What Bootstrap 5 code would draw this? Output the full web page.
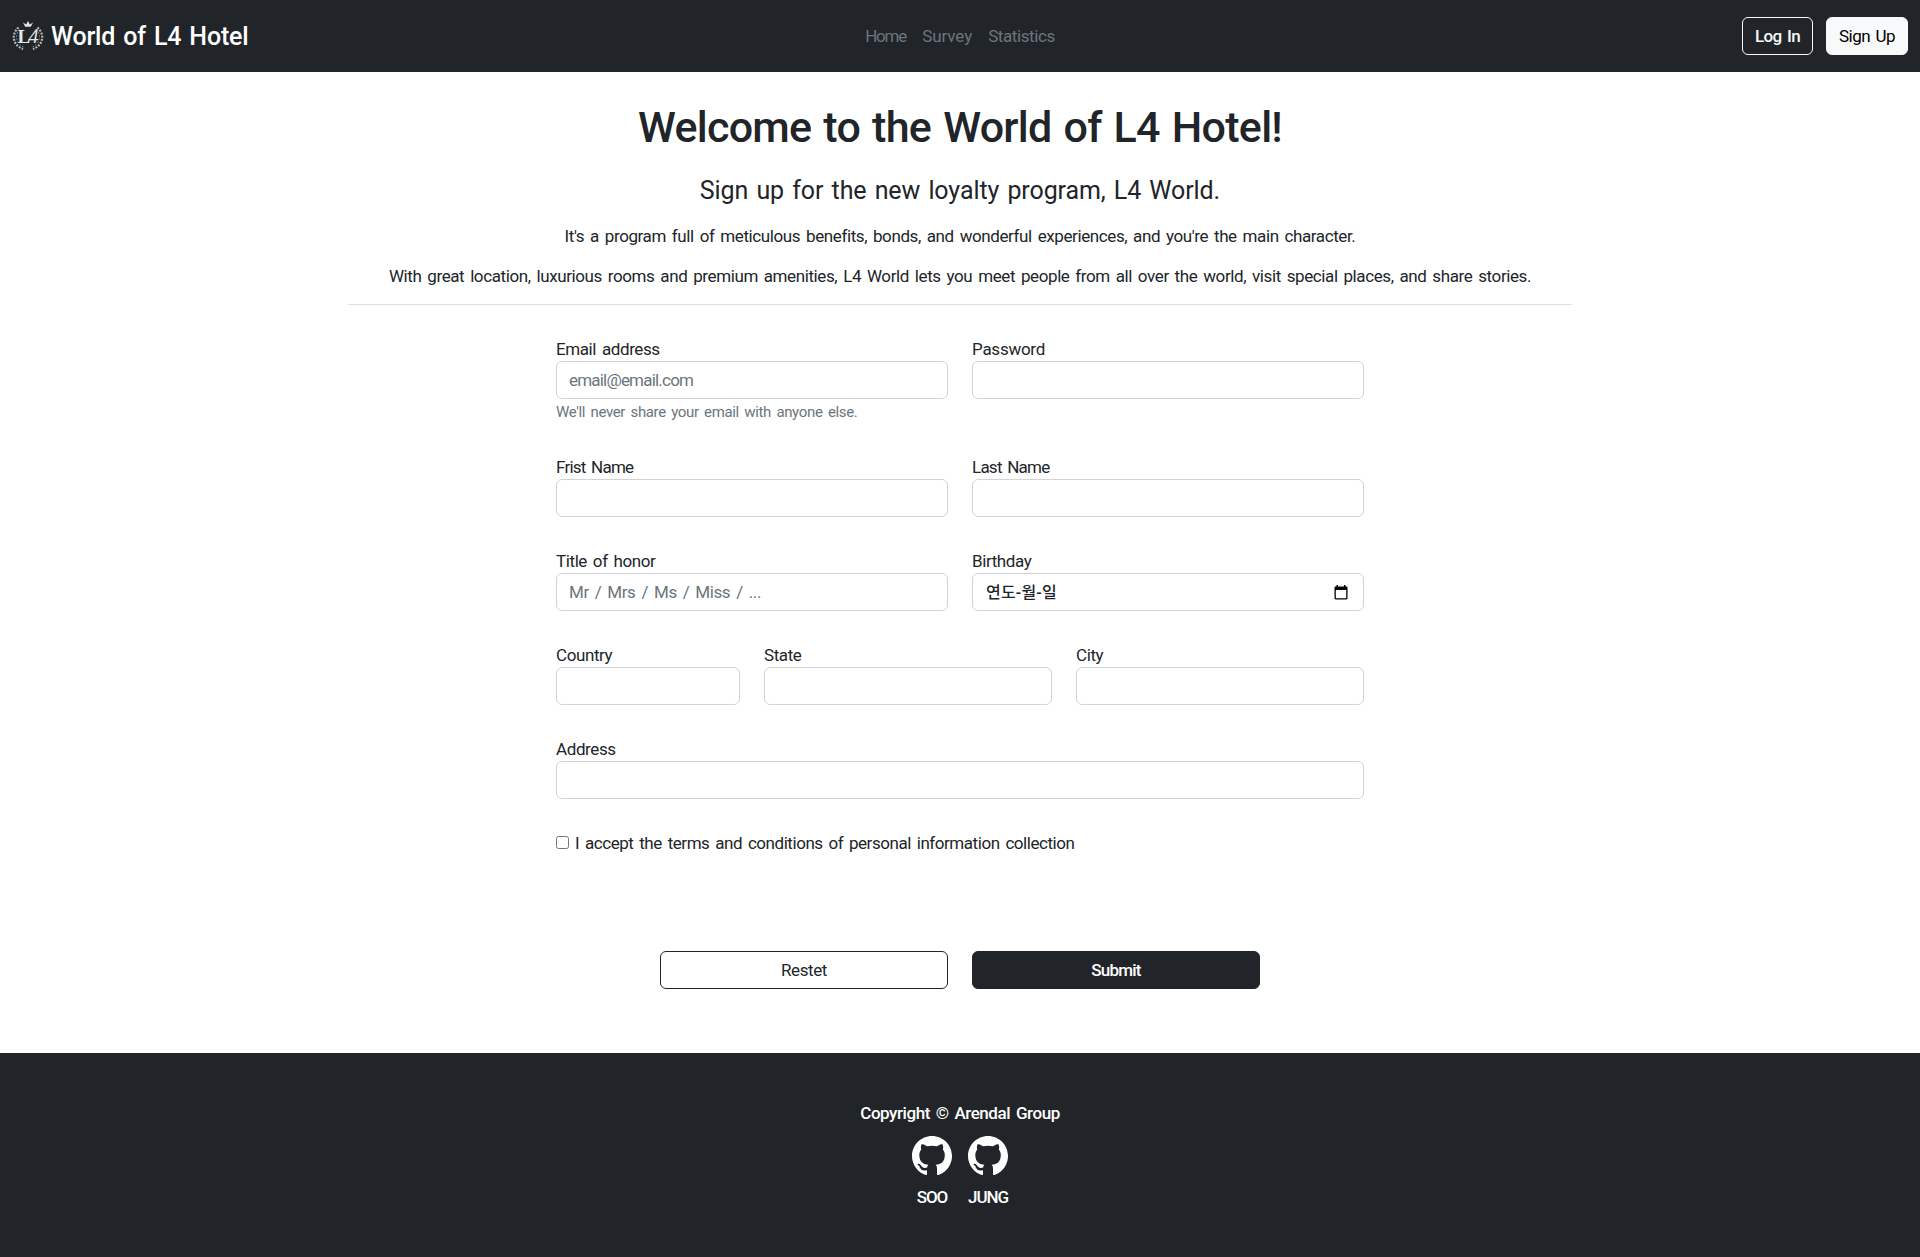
<!DOCTYPE html>
<html lang="en">
<head>
<meta charset="utf-8">
<meta name="viewport" content="width=device-width, initial-scale=1">
<title>World of L4 Hotel</title>
<link href="https://cdn.jsdelivr.net/npm/bootstrap@5.3.0/dist/css/bootstrap.min.css" rel="stylesheet">
<script src="https://cdn.jsdelivr.net/npm/bootstrap@5.3.0/dist/js/bootstrap.bundle.min.js" defer></script>
<style>
body{font-family:Roboto,"Noto Sans CJK KR",sans-serif;font-size:17px;line-height:24px;word-spacing:.12em;color:#212529}
body *{letter-spacing:-.0235em}
.site-nav{height:72px;padding:0 12px}
.side{flex:1 1 0}
.brand{font-size:25px;line-height:36px;letter-spacing:-.0075em;font-weight:500;margin-left:7px;padding-top:2px}
.menu-link{color:#6c757d;text-decoration:none}
.ls-a{letter-spacing:-.0699em}
.ls-b{letter-spacing:-.0044em}
.ls-c{letter-spacing:-.015em}
.ls-d{letter-spacing:-.045em}
.ls-e{letter-spacing:-.06em}
.btn{font-size:17px;line-height:24px;height:38px;padding:6px 12px;word-spacing:.1em;--bs-btn-border-radius:.375rem}
.btn-login{width:71px;font-weight:500;letter-spacing:-.035em}
.btn-join{width:82px;margin-left:13px;letter-spacing:-.031em}
.btn-send{font-weight:500;letter-spacing:-.045em}
.main-wrap{width:1248px}
.intro{padding:31px 12px 0}
.intro h1{font-size:43px;line-height:48px;letter-spacing:-.017em;margin-bottom:22px}
.intro h2{font-size:25px;line-height:36px;letter-spacing:-.0035em;font-weight:400;margin-bottom:15px}
.intro hr{border-color:#dee2e6;opacity:1;margin:16px 0}
.form-control{height:38px;font-size:17px;line-height:24px;padding:6px 12px;border-color:#ced4da}
.form-control::placeholder{color:#6c757d;opacity:1}
.inp-mail{letter-spacing:-.047em}
.inp-honor{word-spacing:.125em}
.hint{font-size:15px;line-height:24px;height:24px;color:#6c757d;padding-top:1px}
.field-label{display:block;line-height:24px}
.date-text{font-size:16px;letter-spacing:.012em;font-weight:500;padding:2px 0 0 1px}
.date-icon{margin-right:3px}
.agree{width:13px;height:13px;margin:0 0 2px}
.agree-text{padding-left:6px;letter-spacing:-.0265em}
.actions{margin-top:96px;margin-bottom:64px}
footer{height:204px;padding-top:48px;font-weight:500}
.copy-line{letter-spacing:-.026em}
.credits{padding-top:11px}
.credit{color:#fff;text-decoration:none;width:40px}
.credit svg{display:block;margin:0 auto 9px}
.logo-text{letter-spacing:0}
</style>
</head>
<body>
<nav class="site-nav d-flex align-items-center bg-dark">
  <div class="side d-flex align-items-center text-white">
    <svg width="32" height="32" viewBox="0 0 32 32" fill="#e4e5e6">
      <path d="M11 2.500l3.200 2.100L16 1l1.800 3.600L21 2.500l-2.200 4.300h-5.600z"/>
      <text class="logo-text" x="5.500" y="23" font-family="Liberation Serif, serif" font-weight="700" font-size="19">L</text>
      <text class="logo-text" x="16.500" y="23" font-family="Liberation Serif, serif" font-style="italic" font-size="20">4</text>
      <g fill="none" stroke="#b9bbbd" stroke-width="2.200" stroke-dasharray="1.900 1.300">
        <path d="M6.500 7.500C-.8 14 .2 25 11 29"/>
        <path d="M25.500 7.500C32.800 14 31.800 25 21 29"/>
      </g>
      <g fill="none" stroke="#8b8e91" stroke-width="1" stroke-dasharray="1.500 1.700">
        <path d="M7.500 9.500C2.500 15 3.500 24 13 27.500"/>
        <path d="M24.500 9.500C29.500 15 28.500 24 19 27.500"/>
      </g>
    </svg>
    <span class="brand">World of L4 Hotel</span>
  </div>
  <div class="d-flex gap-3">
    <a class="menu-link ls-a" href="#">Home</a>
    <a class="menu-link ls-b" href="#">Survey</a>
    <a class="menu-link" href="#">Statistics</a>
  </div>
  <div class="side d-flex justify-content-end">
    <button class="btn btn-outline-light btn-login px-0" type="button">Log In</button>
    <button class="btn btn-light btn-join px-0" type="button">Sign Up</button>
  </div>
</nav>

<main class="main-wrap mx-auto">
  <section class="intro text-center">
    <h1>Welcome to the World of L4 Hotel!</h1>
    <h2>Sign up for the new loyalty program, L4 World.</h2>
    <p class="mb-3">It's a program full of meticulous benefits, bonds, and wonderful experiences, and you're the main character.</p>
    <p class="mb-0">With great location, luxurious rooms and premium amenities, L4 World lets you meet people from all over the world, visit special places, and share stories.</p>
    <hr>
  </section>

  <form class="pt-3">
    <div class="row justify-content-center mx-0 mb-4 pb-2">
      <div class="col-4">
        <label class="field-label" for="email">Email address</label>
        <input class="form-control inp-mail" id="email" type="email" placeholder="email@email.com">
        <div class="hint">We'll never share your email with anyone else.</div>
      </div>
      <div class="col-4">
        <label class="field-label ls-c" for="password">Password</label>
        <input class="form-control" id="password" type="password">
      </div>
    </div>
    <div class="row justify-content-center mx-0 mb-4 pb-2">
      <div class="col-4">
        <label class="field-label ls-d" for="first">Frist Name</label>
        <input class="form-control" id="first" type="text">
      </div>
      <div class="col-4">
        <label class="field-label ls-d" for="last">Last Name</label>
        <input class="form-control" id="last" type="text">
      </div>
    </div>
    <div class="row justify-content-center mx-0 mb-4 pb-2">
      <div class="col-4">
        <label class="field-label" for="honor">Title of honor</label>
        <input class="form-control inp-honor" id="honor" type="text" placeholder="Mr / Mrs / Ms / Miss / ...">
      </div>
      <div class="col-4">
        <span class="field-label">Birthday</span>
        <div class="form-control d-flex align-items-center justify-content-between" role="textbox">
          <span class="date-text">연도-월-일</span>
          <svg class="date-icon" width="14" height="15" viewBox="0 0 14 15"><path d="M2.500 0h1.500v1.500h6V0h1.500v1.500h.8c.7 0 1.200.5 1.200 1.200v10.600c0 .7-.5 1.200-1.200 1.200H1.700C1 14.500.5 14 .5 13.300V2.700C.5 2 1 1.500 1.700 1.500h.8zM1.800 5v8.200h10.400V5z" fill="#000"/></svg>
        </div>
      </div>
    </div>
    <div class="row justify-content-center mx-0 mb-4 pb-2">
      <div class="col-2">
        <label class="field-label" for="country">Country</label>
        <input class="form-control" id="country" type="text">
      </div>
      <div class="col-3">
        <label class="field-label" for="state">State</label>
        <input class="form-control" id="state" type="text">
      </div>
      <div class="col-3">
        <label class="field-label" for="city">City</label>
        <input class="form-control" id="city" type="text">
      </div>
    </div>
    <div class="row justify-content-center mx-0 mb-4 pb-2">
      <div class="col-8">
        <label class="field-label" for="address">Address</label>
        <input class="form-control" id="address" type="text">
      </div>
    </div>
    <div class="row justify-content-center mx-0">
      <div class="col-8 d-flex align-items-center">
        <input class="agree" id="agree" type="checkbox">
        <label class="agree-text" for="agree">I accept the terms and conditions of personal information collection</label>
      </div>
    </div>
    <div class="row justify-content-center mx-0 actions">
      <div class="col-3"><button class="btn btn-outline-dark w-100" type="reset">Restet</button></div>
      <div class="col-3"><button class="btn btn-dark btn-send w-100" type="button">Submit</button></div>
    </div>
  </form>
</main>

<footer class="bg-dark text-white text-center">
  <div class="copy-line">Copyright © Arendal Group</div>
  <div class="credits d-flex justify-content-center gap-3">
    <a class="credit" href="#">
      <svg width="40" height="40" viewBox="0 0 16 16" fill="#fff"><path d="M8 0C3.580 0 0 3.580 0 8c0 3.540 2.290 6.530 5.470 7.590.4.070.55-.17.55-.38 0-.19-.010-.82-.010-1.490-2.010.37-2.530-.49-2.690-.94-.090-.23-.48-.94-.82-1.130-.28-.15-.68-.52-.010-.53.630-.010 1.080.58 1.230.82.720 1.210 1.870.87 2.330.66.070-.52.280-.87.510-1.070-1.780-.2-3.640-.89-3.640-3.950 0-.87.310-1.590.82-2.150-.080-.2-.36-1.020.080-2.120 0 0 .67-.21 2.200.82.640-.18 1.320-.27 2-.27s1.360.090 2 .27c1.530-1.040 2.200-.82 2.200-.82.440 1.100.160 1.920.080 2.120.51.560.82 1.270.82 2.150 0 3.070-1.870 3.750-3.650 3.950.290.25.540.73.540 1.480 0 1.070-.010 1.930-.010 2.200 0 .21.150.46.550.38A8.010 8.010 0 0 0 16 8c0-4.420-3.580-8-8-8"/></svg>
      <span class="ls-e">SOO</span>
    </a>
    <a class="credit" href="#">
      <svg width="40" height="40" viewBox="0 0 16 16" fill="#fff"><path d="M8 0C3.580 0 0 3.580 0 8c0 3.540 2.290 6.530 5.470 7.590.4.070.55-.17.55-.38 0-.19-.010-.82-.010-1.490-2.010.37-2.530-.49-2.690-.94-.090-.23-.48-.94-.82-1.130-.28-.15-.68-.52-.010-.53.630-.010 1.080.58 1.230.82.720 1.210 1.870.87 2.330.66.070-.52.280-.87.510-1.070-1.780-.2-3.640-.89-3.640-3.950 0-.87.310-1.590.82-2.150-.080-.2-.36-1.020.080-2.120 0 0 .67-.21 2.200.82.640-.18 1.320-.27 2-.27s1.360.090 2 .27c1.530-1.040 2.200-.82 2.200-.82.440 1.100.160 1.920.080 2.120.51.560.82 1.270.82 2.150 0 3.070-1.870 3.750-3.650 3.950.290.25.540.73.540 1.480 0 1.070-.010 1.930-.010 2.200 0 .21.150.46.550.38A8.010 8.010 0 0 0 16 8c0-4.420-3.580-8-8-8"/></svg>
      <span class="ls-e">JUNG</span>
    </a>
  </div>
</footer>
</body>
</html>
